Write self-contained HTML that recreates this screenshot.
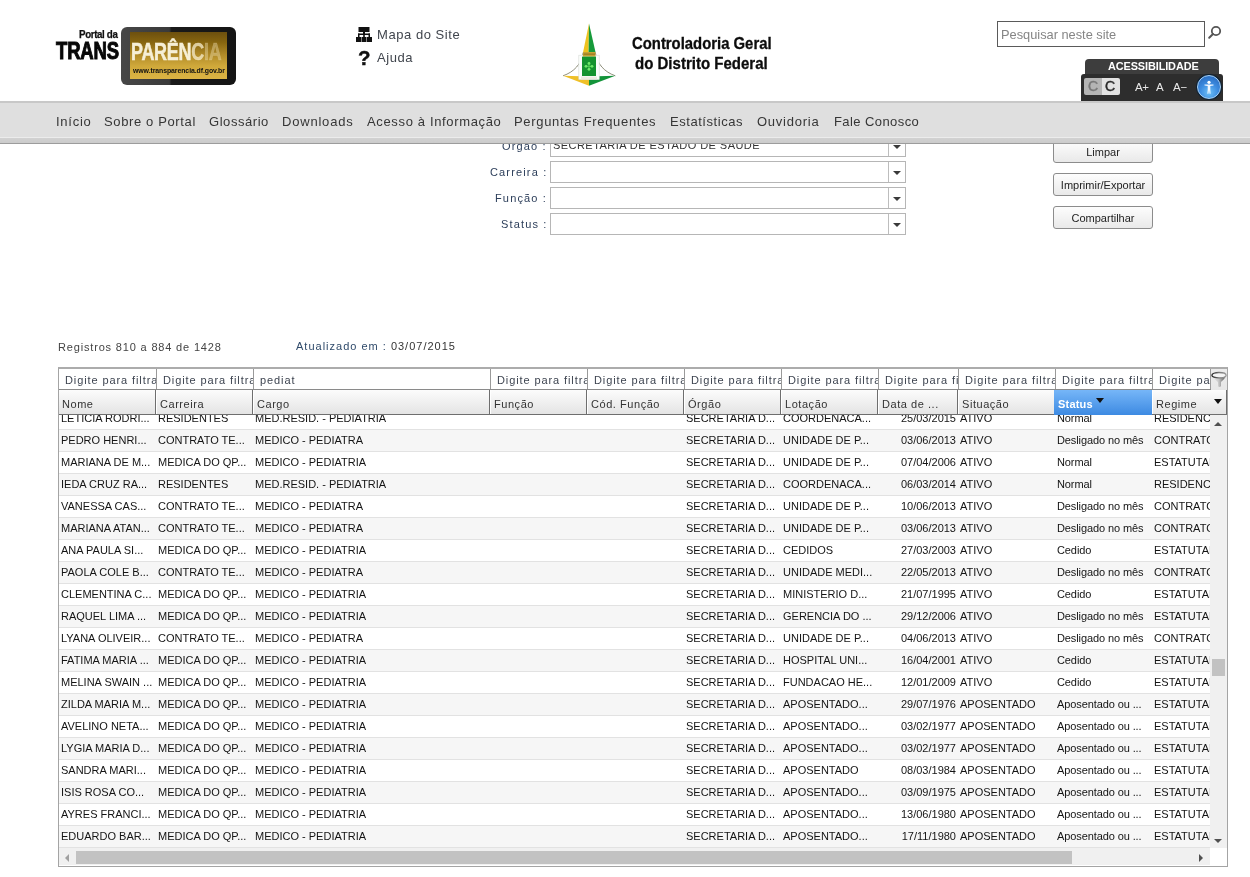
<!DOCTYPE html>
<html>
<head>
<meta charset="utf-8">
<style>
*{box-sizing:border-box;margin:0;padding:0}
html,body{width:1250px;height:877px;overflow:hidden;background:#fff;font-family:"Liberation Sans",sans-serif;position:relative}
body>*{will-change:transform}
.a{position:absolute;white-space:nowrap}
/* nav */
#nav{position:absolute;left:0;top:101px;width:1250px;height:43px;background:#dfdfdf;border-top:2px solid #c8c8c8;z-index:5}
#nav:after{content:"";position:absolute;left:0;right:0;top:34px;height:6px;box-sizing:content-box;background:linear-gradient(#ececec 0,#ececec 1px,#d2d2d2 1px,#cbcbcb);border-bottom:1px solid #9c9c9c}
.ni{position:absolute;top:11px;font-size:13px;color:#363636;letter-spacing:0.55px;line-height:16px}
/* form */
.lbl{position:absolute;font-size:11px;color:#2c3e5a;text-align:right;right:703px;letter-spacing:1.15px;line-height:14px}
.dd{position:absolute;left:550px;width:356px;height:22px;border:1px solid #b6b6b6;background:#fff}
.dd .ar{position:absolute;right:0;top:0;width:17px;height:20px;border-left:1px solid #bdbdbd}
.dd .ar:after{content:"";box-sizing:content-box;position:absolute;left:4px;top:9px;border-left:4px solid transparent;border-right:4px solid transparent;border-top:4px solid #3a3a3a}
/* grid */
.fc{position:absolute;top:0;height:20px;border-right:1px solid #9a9a9a;padding-left:7px;padding-top:1px;font-size:11px;color:#3d4450;letter-spacing:0.9px;line-height:20px;overflow:hidden;white-space:nowrap}
.hc{position:absolute;top:21px;height:25px;border-right:1px solid #6e6e6e;border-bottom:1px solid #6e6e6e;box-shadow:inset 1px 0 #fff;background:linear-gradient(#fcfcfc,#e4e4e4);padding-left:4px;padding-top:7px;font-size:11px;color:#333;letter-spacing:0.55px;line-height:14px;overflow:hidden;white-space:nowrap}
.hs{background:linear-gradient(#76b6f8,#3d8ae2);color:#fff;font-weight:bold;letter-spacing:0.2px;border-right:none;border-bottom:none;box-shadow:none;padding-left:4px}
.hs .tri{position:absolute;left:42px;top:8px;border-left:4px solid transparent;border-right:4px solid transparent;border-top:5px solid #111}
.rw{position:absolute;left:0;width:1151px;height:22px;border-bottom:1px solid #e2e2e2}
.dc{position:absolute;top:0;height:21px;padding-left:3px;font-size:11px;color:#141414;line-height:21px;overflow:hidden;white-space:nowrap}
.st{letter-spacing:-0.1px;padding-left:2px}
.btn{position:absolute;left:1053px;width:100px;height:23px;border:1px solid #8c8c8c;border-radius:3px;background:linear-gradient(#fdfdfd,#e9e9e9);font-size:11px;color:#222;text-align:center;line-height:22px}
</style>
</head>
<body>
<!-- HEADER -->
<div id="hdr">
  <!-- logo -->
  <div class="a" style="left:79px;top:28px;font-size:10.5px;font-weight:bold;color:#111;letter-spacing:-0.4px;line-height:12px;transform:scaleX(0.93);-webkit-text-stroke:0.25px #111;transform-origin:0 0">Portal da</div>
  <div class="a" style="left:56.3px;top:37px;font-size:23.6px;font-weight:bold;color:#080808;line-height:29px;transform:scaleX(0.785);transform-origin:0 0;letter-spacing:-0.2px;-webkit-text-stroke:1px #080808">TRANS</div>
  <div class="a" style="left:121px;top:27px;width:115px;height:58px;border-radius:6px;background:linear-gradient(90deg,#474747 0%,#3a3a3a 42%,#1a1a1a 44%,#141414 100%)"></div>
  <div class="a" style="left:130px;top:32px;width:97px;height:47px;background:linear-gradient(180deg,#6c4f0e 0%,#87650f 22%,#b08a28 48%,#cfa83a 72%,#dcb444 100%)"></div>
  <div class="a" style="left:131px;top:38px;font-size:23px;font-weight:bold;line-height:28px;transform:scaleX(0.78);transform-origin:0 0;letter-spacing:-0.3px;color:#f6efd6;-webkit-text-stroke:0.5px #f6efd6">PARÊN<span style="color:rgba(246,236,205,0.75);-webkit-text-stroke-color:rgba(246,236,205,0.6)">C</span><span style="color:rgba(240,225,180,0.4);-webkit-text-stroke-color:rgba(240,225,180,0.3)">IA</span></div>
  <div class="a" style="left:133px;top:66px;font-size:8px;font-weight:bold;color:#111;line-height:9px;transform:scaleX(0.865);transform-origin:0 0;letter-spacing:-0.1px">www.transparencia.df.gov.br</div>

  <!-- mapa / ajuda -->
  <svg class="a" style="left:356px;top:27px" width="16" height="15" viewBox="0 0 16 15">
    <rect x="2.5" y="0" width="11" height="5" fill="#111"/>
    <rect x="7" y="5" width="2" height="2.5" fill="#111"/>
    <rect x="2" y="6.5" width="12" height="1.5" fill="#111"/>
    <rect x="2" y="6.5" width="1.5" height="4" fill="#111"/>
    <rect x="12.5" y="6.5" width="1.5" height="4" fill="#111"/>
    <rect x="7.2" y="6.5" width="1.6" height="4" fill="#111"/>
    <rect x="0" y="10" width="5" height="5" fill="#111"/>
    <rect x="5.5" y="10" width="5" height="5" fill="#111"/>
    <rect x="11" y="10" width="5" height="5" fill="#111"/>
  </svg>
  <div class="a" style="left:377px;top:27px;font-size:13px;color:#40454d;letter-spacing:0.55px;line-height:16px">Mapa do Site</div>
  <div class="a" style="left:358px;top:47px;font-size:19.5px;font-weight:bold;color:#111;line-height:22px;transform:scaleX(1.05);transform-origin:0 0;-webkit-text-stroke:0.4px #111">?</div>
  <div class="a" style="left:377px;top:50px;font-size:13px;color:#40454d;letter-spacing:0.55px;line-height:16px">Ajuda</div>

  <!-- CGDF emblem -->
  <svg class="a" style="left:558px;top:18px" width="62" height="72" viewBox="0 0 62 72">
    <path d="M25.2 34.5 C23.5 46 16 54 5 57.8" stroke="#6a6a50" stroke-width="0.75" fill="none"/>
    <path d="M37.3 34.5 C39 46 46.5 54 57.3 57.8" stroke="#6a6a50" stroke-width="0.75" fill="none"/>
    <path d="M5 57.8 L31 58.5 L31 67.8 Z" fill="#efc028"/>
    <path d="M57.3 57.8 L31 58.5 L31 67.8 Z" fill="#13943a"/>
    <path d="M31 5.5 L25 34.5 L30.6 34.5 Z" fill="#efc21e"/>
    <path d="M31 5.5 L37.6 34.5 L30.6 34.5 Z" fill="#169a3a"/>
    <rect x="20.8" y="37.2" width="20.4" height="24.4" fill="#fbfdfb" stroke="#d8dcd8" stroke-width="0.6"/>
    <rect x="25" y="34" width="12.5" height="4.6" fill="#c9a234"/>
    <rect x="25.5" y="35.6" width="11.5" height="1" fill="#8a7020"/>
    <rect x="24" y="38.6" width="14" height="19.4" fill="#14932f"/>
    <path d="M31 44.2 L31 52.4 M26.9 48.3 L35.1 48.3" stroke="#57d457" stroke-width="0.9"/>
    <circle cx="31" cy="45.4" r="1.4" fill="#6ee86a"/>
    <circle cx="31" cy="51.3" r="1.4" fill="#6ee86a"/>
    <circle cx="28" cy="48.3" r="1.4" fill="#6ee86a"/>
    <circle cx="34" cy="48.3" r="1.4" fill="#6ee86a"/>
    <rect x="23" y="58.6" width="16" height="2.8" fill="#ecece0"/>
  </svg>
  <div class="a" style="left:631.5px;top:35px;font-size:15.6px;font-weight:bold;color:#0c0c0c;line-height:18px;transform:scaleX(0.953);transform-origin:0 0;-webkit-text-stroke:0.3px #0c0c0c">Controladoria Geral</div>
  <div class="a" style="left:635px;top:55px;font-size:15.6px;font-weight:bold;color:#0c0c0c;line-height:18px;transform:scaleX(0.963);transform-origin:0 0;-webkit-text-stroke:0.3px #0c0c0c">do Distrito Federal</div>

  <!-- search -->
  <div class="a" style="left:997px;top:21px;width:208px;height:26px;border:1px solid #5a5a5a;background:#fff"></div>
  <div class="a" style="left:1001px;top:27px;font-size:12.8px;color:#858585;line-height:16px">Pesquisar neste site</div>
  <svg class="a" style="left:1206px;top:23px" width="18" height="18" viewBox="0 0 18 18">
    <circle cx="10" cy="8" r="4.2" stroke="#555" stroke-width="1.8" fill="none"/>
    <line x1="7" y1="11" x2="3.2" y2="14.8" stroke="#555" stroke-width="2" stroke-linecap="round"/>
  </svg>

  <!-- accessibility -->
  <div class="a" style="left:1085px;top:59px;width:134px;height:16px;background:#3d3d3d;border-radius:4px 4px 0 0"></div>
  <div class="a" style="left:1108px;top:59px;font-size:10.9px;font-weight:bold;color:#fff;line-height:14px;letter-spacing:-0.1px">ACESSIBILIDADE</div>
  <div class="a" style="left:1081px;top:74px;width:142px;height:27px;background:#2d2d2d;border-radius:3px 3px 0 0"></div>
  <div class="a" style="left:1084px;top:78px;width:18px;height:17px;background:#b4b4b4;border-radius:2px 0 0 2px"></div>
  <div class="a" style="left:1102px;top:78px;width:18px;height:17px;background:#e2e2e2;border-radius:0 2px 2px 0"></div>
  <div class="a" style="left:1088px;top:78px;font-size:14px;color:#777;line-height:17px;-webkit-text-stroke:0.45px #777">C</div>
  <div class="a" style="left:1105px;top:78px;font-size:14px;color:#2a2a2a;line-height:17px;-webkit-text-stroke:0.45px #2a2a2a">C</div>
  <div class="a" style="left:1135px;top:80px;font-size:11.5px;color:#e8e8e8;line-height:14px;letter-spacing:-0.3px">A+</div><div class="a" style="left:1156px;top:80px;font-size:11.5px;color:#e8e8e8;line-height:14px">A</div><div class="a" style="left:1173px;top:80px;font-size:11.5px;color:#e8e8e8;line-height:14px;letter-spacing:-0.2px">A−</div>
  <div class="a" style="left:1196px;top:74px;width:26px;height:26px;border-radius:50%;background:#0e2236"></div>
  <div class="a" style="left:1197px;top:75px;width:24px;height:24px;border-radius:50%;background:radial-gradient(circle at 50% 75%,#6cc0f8 0%,#3d8ce0 45%,#2f74c8 75%);border:1.6px solid #a9d2f6"></div>
  <svg class="a" style="left:1200px;top:78px" width="18" height="18" viewBox="0 0 18 18">
    <circle cx="9" cy="4.3" r="1.6" fill="#fff"/>
    <path d="M4.5 6.6 L13.5 6.6 L13.5 7.6 L10.3 8.1 L10.3 11.5 L10.6 15.8 L9.6 15.8 L9 12 L8.4 15.8 L7.4 15.8 L7.7 11.5 L7.7 8.1 L4.5 7.6 Z" fill="#f4f8ff"/>
  </svg>
</div>

<!-- FORM (scrolled under nav) -->
<div class="lbl" style="top:139px">Órgão :</div>
<div class="dd" style="top:135px"><div class="a" style="left:2px;top:2px;font-size:11px;color:#333;letter-spacing:0.45px;line-height:14px">SECRETARIA DE ESTADO DE SAUDE</div><div class="ar"></div></div>
<div class="lbl" style="top:165px">Carreira :</div>
<div class="dd" style="top:161px"><div class="ar"></div></div>
<div class="lbl" style="top:191px">Função :</div>
<div class="dd" style="top:187px"><div class="ar"></div></div>
<div class="lbl" style="top:217px">Status :</div>
<div class="dd" style="top:213px"><div class="ar"></div></div>

<div class="btn" style="top:140px">Limpar</div>
<div class="btn" style="top:173px">Imprimir/Exportar</div>
<div class="btn" style="top:206px">Compartilhar</div>

<!-- NAV -->
<div id="nav">
  <div class="ni" style="left:56px;letter-spacing:0.75px">Início</div>
  <div class="ni" style="left:104px;letter-spacing:0.63px">Sobre o Portal</div>
  <div class="ni" style="left:209px">Glossário</div>
  <div class="ni" style="left:282px;letter-spacing:0.8px">Downloads</div>
  <div class="ni" style="left:367px;letter-spacing:0.65px">Acesso à Informação</div>
  <div class="ni" style="left:514px;letter-spacing:0.68px">Perguntas Frequentes</div>
  <div class="ni" style="left:670px">Estatísticas</div>
  <div class="ni" style="left:757px;letter-spacing:0.75px">Ouvidoria</div>
  <div class="ni" style="left:834px;letter-spacing:0.42px">Fale Conosco</div>
</div>

<!-- RECORDS -->
<div class="a" style="left:58px;top:340px;font-size:11px;color:#444;letter-spacing:0.83px;line-height:14px">Registros 810 a 884 de 1428</div>
<div class="a" style="left:296px;top:339px;font-size:11px;color:#2f4a6a;letter-spacing:1px;line-height:14px">Atualizado em : <span style="color:#333">03/07/2015</span></div>

<!-- GRID -->
<div id="grid" class="a" style="left:58px;top:367px;width:1170px;height:500px;border:1px solid #a4a4a4;border-top:2px solid #acacac;background:#fff;overflow:hidden">
<div class="a" style="left:0;top:0;width:1168px;height:21px;border-bottom:1px solid #8a8a8a;background:#fff"></div>
<div class="fc" style="left:-1px;width:99px">Digite para filtra</div>
<div class="fc" style="left:97px;width:98px">Digite para filtra</div>
<div class="fc" style="left:194px;width:238px">pediat</div>
<div class="fc" style="left:431px;width:98px">Digite para filtra</div>
<div class="fc" style="left:528px;width:98px">Digite para filtra</div>
<div class="fc" style="left:625px;width:98px">Digite para filtra</div>
<div class="fc" style="left:722px;width:98px">Digite para filtra</div>
<div class="fc" style="left:819px;width:81px">Digite para fi</div>
<div class="fc" style="left:899px;width:98px">Digite para filtra</div>
<div class="fc" style="left:996px;width:98px">Digite para filtra</div>
<div class="fc" style="left:1093px;width:59px">Digite para filtra</div>
<div class="a" style="left:1152px;top:0;width:16px;height:46px;background:linear-gradient(#ececec,#e0e0e0)"></div>
<svg class="a" style="left:1152px;top:2px" width="16" height="17" viewBox="0 0 16 17"><defs><linearGradient id="fb" x1="0" x2="1"><stop offset="0" stop-color="#f2f2f2"/><stop offset="0.5" stop-color="#c4c4c4"/><stop offset="1" stop-color="#4a4a4a"/></linearGradient><linearGradient id="fr" x1="0" x2="1"><stop offset="0" stop-color="#1e1e1e"/><stop offset="0.5" stop-color="#777"/><stop offset="1" stop-color="#9a9a9a"/></linearGradient></defs><path d="M0.8 4.2 Q3 9 7 11 L7.2 15.6 Q8.6 16.4 10 15.2 L10 11 Q13.6 8.5 15.2 4.2 Z" fill="url(#fb)"/><ellipse cx="8" cy="4.2" rx="7.1" ry="2.7" fill="#f4f4f4" stroke="url(#fr)" stroke-width="1.3"/></svg>
<div class="hc" style="left:-1px;width:98px">Nome</div>
<div class="hc" style="left:97px;width:97px">Carreira</div>
<div class="hc" style="left:194px;width:237px">Cargo</div>
<div class="hc" style="left:431px;width:97px">Função</div>
<div class="hc" style="left:528px;width:97px">Cód. Função</div>
<div class="hc" style="left:625px;width:97px">Órgão</div>
<div class="hc" style="left:722px;width:97px">Lotação</div>
<div class="hc" style="left:819px;width:80px">Data de ...</div>
<div class="hc" style="left:899px;width:97px">Situação</div>
<div class="hc hs" style="left:995px;width:98px">Status<span class="tri"></span></div>
<div class="hc" style="left:1093px;width:75px">Regime</div>
<div class="a" style="left:1155px;top:30px;border-left:4px solid transparent;border-right:4px solid transparent;border-top:5px solid #111"></div>
<div class="a" style="left:0;top:46px;width:1151px;height:433px;overflow:hidden">
<div class="rw" style="top:-7px;background:#fff">
<div class="dc" style="left:-1px;width:98px">LETICIA RODRI...</div>
<div class="dc" style="left:97px;width:97px;padding-left:2px">RESIDENTES</div>
<div class="dc" style="left:194px;width:237px;padding-left:2px">MED.RESID. - PEDIATRIA</div>
<div class="dc" style="left:625px;width:97px;padding-left:2px">SECRETARIA D...</div>
<div class="dc" style="left:722px;width:97px;padding-left:2px">COORDENACA...</div>
<div class="dc" style="left:819px;width:78px;text-align:right;padding:0">25/03/2015</div>
<div class="dc" style="left:899px;width:97px;padding-left:2px">ATIVO</div>
<div class="dc st" style="left:996px;width:97px">Normal</div>
<div class="dc" style="left:1093px;width:58px;padding-left:2px">RESIDENCIA</div>
</div>
<div class="rw" style="top:15px;background:#f6f6f6">
<div class="dc" style="left:-1px;width:98px">PEDRO HENRI...</div>
<div class="dc" style="left:97px;width:97px;padding-left:2px">CONTRATO TE...</div>
<div class="dc" style="left:194px;width:237px;padding-left:2px">MEDICO - PEDIATRA</div>
<div class="dc" style="left:625px;width:97px;padding-left:2px">SECRETARIA D...</div>
<div class="dc" style="left:722px;width:97px;padding-left:2px">UNIDADE DE P...</div>
<div class="dc" style="left:819px;width:78px;text-align:right;padding:0">03/06/2013</div>
<div class="dc" style="left:899px;width:97px;padding-left:2px">ATIVO</div>
<div class="dc st" style="left:996px;width:97px">Desligado no mês</div>
<div class="dc" style="left:1093px;width:58px;padding-left:2px">CONTRATO</div>
</div>
<div class="rw" style="top:37px;background:#fff">
<div class="dc" style="left:-1px;width:98px">MARIANA DE M...</div>
<div class="dc" style="left:97px;width:97px;padding-left:2px">MEDICA DO QP...</div>
<div class="dc" style="left:194px;width:237px;padding-left:2px">MEDICO - PEDIATRIA</div>
<div class="dc" style="left:625px;width:97px;padding-left:2px">SECRETARIA D...</div>
<div class="dc" style="left:722px;width:97px;padding-left:2px">UNIDADE DE P...</div>
<div class="dc" style="left:819px;width:78px;text-align:right;padding:0">07/04/2006</div>
<div class="dc" style="left:899px;width:97px;padding-left:2px">ATIVO</div>
<div class="dc st" style="left:996px;width:97px">Normal</div>
<div class="dc" style="left:1093px;width:58px;padding-left:2px">ESTATUTARIO</div>
</div>
<div class="rw" style="top:59px;background:#f6f6f6">
<div class="dc" style="left:-1px;width:98px">IEDA CRUZ RA...</div>
<div class="dc" style="left:97px;width:97px;padding-left:2px">RESIDENTES</div>
<div class="dc" style="left:194px;width:237px;padding-left:2px">MED.RESID. - PEDIATRIA</div>
<div class="dc" style="left:625px;width:97px;padding-left:2px">SECRETARIA D...</div>
<div class="dc" style="left:722px;width:97px;padding-left:2px">COORDENACA...</div>
<div class="dc" style="left:819px;width:78px;text-align:right;padding:0">06/03/2014</div>
<div class="dc" style="left:899px;width:97px;padding-left:2px">ATIVO</div>
<div class="dc st" style="left:996px;width:97px">Normal</div>
<div class="dc" style="left:1093px;width:58px;padding-left:2px">RESIDENCIA</div>
</div>
<div class="rw" style="top:81px;background:#fff">
<div class="dc" style="left:-1px;width:98px">VANESSA CAS...</div>
<div class="dc" style="left:97px;width:97px;padding-left:2px">CONTRATO TE...</div>
<div class="dc" style="left:194px;width:237px;padding-left:2px">MEDICO - PEDIATRA</div>
<div class="dc" style="left:625px;width:97px;padding-left:2px">SECRETARIA D...</div>
<div class="dc" style="left:722px;width:97px;padding-left:2px">UNIDADE DE P...</div>
<div class="dc" style="left:819px;width:78px;text-align:right;padding:0">10/06/2013</div>
<div class="dc" style="left:899px;width:97px;padding-left:2px">ATIVO</div>
<div class="dc st" style="left:996px;width:97px">Desligado no mês</div>
<div class="dc" style="left:1093px;width:58px;padding-left:2px">CONTRATO</div>
</div>
<div class="rw" style="top:103px;background:#f6f6f6">
<div class="dc" style="left:-1px;width:98px">MARIANA ATAN...</div>
<div class="dc" style="left:97px;width:97px;padding-left:2px">CONTRATO TE...</div>
<div class="dc" style="left:194px;width:237px;padding-left:2px">MEDICO - PEDIATRA</div>
<div class="dc" style="left:625px;width:97px;padding-left:2px">SECRETARIA D...</div>
<div class="dc" style="left:722px;width:97px;padding-left:2px">UNIDADE DE P...</div>
<div class="dc" style="left:819px;width:78px;text-align:right;padding:0">03/06/2013</div>
<div class="dc" style="left:899px;width:97px;padding-left:2px">ATIVO</div>
<div class="dc st" style="left:996px;width:97px">Desligado no mês</div>
<div class="dc" style="left:1093px;width:58px;padding-left:2px">CONTRATO</div>
</div>
<div class="rw" style="top:125px;background:#fff">
<div class="dc" style="left:-1px;width:98px">ANA PAULA SI...</div>
<div class="dc" style="left:97px;width:97px;padding-left:2px">MEDICA DO QP...</div>
<div class="dc" style="left:194px;width:237px;padding-left:2px">MEDICO - PEDIATRIA</div>
<div class="dc" style="left:625px;width:97px;padding-left:2px">SECRETARIA D...</div>
<div class="dc" style="left:722px;width:97px;padding-left:2px">CEDIDOS</div>
<div class="dc" style="left:819px;width:78px;text-align:right;padding:0">27/03/2003</div>
<div class="dc" style="left:899px;width:97px;padding-left:2px">ATIVO</div>
<div class="dc st" style="left:996px;width:97px">Cedido</div>
<div class="dc" style="left:1093px;width:58px;padding-left:2px">ESTATUTARIO</div>
</div>
<div class="rw" style="top:147px;background:#f6f6f6">
<div class="dc" style="left:-1px;width:98px">PAOLA COLE B...</div>
<div class="dc" style="left:97px;width:97px;padding-left:2px">CONTRATO TE...</div>
<div class="dc" style="left:194px;width:237px;padding-left:2px">MEDICO - PEDIATRA</div>
<div class="dc" style="left:625px;width:97px;padding-left:2px">SECRETARIA D...</div>
<div class="dc" style="left:722px;width:97px;padding-left:2px">UNIDADE MEDI...</div>
<div class="dc" style="left:819px;width:78px;text-align:right;padding:0">22/05/2013</div>
<div class="dc" style="left:899px;width:97px;padding-left:2px">ATIVO</div>
<div class="dc st" style="left:996px;width:97px">Desligado no mês</div>
<div class="dc" style="left:1093px;width:58px;padding-left:2px">CONTRATO</div>
</div>
<div class="rw" style="top:169px;background:#fff">
<div class="dc" style="left:-1px;width:98px">CLEMENTINA C...</div>
<div class="dc" style="left:97px;width:97px;padding-left:2px">MEDICA DO QP...</div>
<div class="dc" style="left:194px;width:237px;padding-left:2px">MEDICO - PEDIATRIA</div>
<div class="dc" style="left:625px;width:97px;padding-left:2px">SECRETARIA D...</div>
<div class="dc" style="left:722px;width:97px;padding-left:2px">MINISTERIO D...</div>
<div class="dc" style="left:819px;width:78px;text-align:right;padding:0">21/07/1995</div>
<div class="dc" style="left:899px;width:97px;padding-left:2px">ATIVO</div>
<div class="dc st" style="left:996px;width:97px">Cedido</div>
<div class="dc" style="left:1093px;width:58px;padding-left:2px">ESTATUTARIO</div>
</div>
<div class="rw" style="top:191px;background:#f6f6f6">
<div class="dc" style="left:-1px;width:98px">RAQUEL LIMA ...</div>
<div class="dc" style="left:97px;width:97px;padding-left:2px">MEDICA DO QP...</div>
<div class="dc" style="left:194px;width:237px;padding-left:2px">MEDICO - PEDIATRIA</div>
<div class="dc" style="left:625px;width:97px;padding-left:2px">SECRETARIA D...</div>
<div class="dc" style="left:722px;width:97px;padding-left:2px">GERENCIA DO ...</div>
<div class="dc" style="left:819px;width:78px;text-align:right;padding:0">29/12/2006</div>
<div class="dc" style="left:899px;width:97px;padding-left:2px">ATIVO</div>
<div class="dc st" style="left:996px;width:97px">Desligado no mês</div>
<div class="dc" style="left:1093px;width:58px;padding-left:2px">ESTATUTARIO</div>
</div>
<div class="rw" style="top:213px;background:#fff">
<div class="dc" style="left:-1px;width:98px">LYANA OLIVEIR...</div>
<div class="dc" style="left:97px;width:97px;padding-left:2px">CONTRATO TE...</div>
<div class="dc" style="left:194px;width:237px;padding-left:2px">MEDICO - PEDIATRA</div>
<div class="dc" style="left:625px;width:97px;padding-left:2px">SECRETARIA D...</div>
<div class="dc" style="left:722px;width:97px;padding-left:2px">UNIDADE DE P...</div>
<div class="dc" style="left:819px;width:78px;text-align:right;padding:0">04/06/2013</div>
<div class="dc" style="left:899px;width:97px;padding-left:2px">ATIVO</div>
<div class="dc st" style="left:996px;width:97px">Desligado no mês</div>
<div class="dc" style="left:1093px;width:58px;padding-left:2px">CONTRATO</div>
</div>
<div class="rw" style="top:235px;background:#f6f6f6">
<div class="dc" style="left:-1px;width:98px">FATIMA MARIA ...</div>
<div class="dc" style="left:97px;width:97px;padding-left:2px">MEDICA DO QP...</div>
<div class="dc" style="left:194px;width:237px;padding-left:2px">MEDICO - PEDIATRIA</div>
<div class="dc" style="left:625px;width:97px;padding-left:2px">SECRETARIA D...</div>
<div class="dc" style="left:722px;width:97px;padding-left:2px">HOSPITAL UNI...</div>
<div class="dc" style="left:819px;width:78px;text-align:right;padding:0">16/04/2001</div>
<div class="dc" style="left:899px;width:97px;padding-left:2px">ATIVO</div>
<div class="dc st" style="left:996px;width:97px">Cedido</div>
<div class="dc" style="left:1093px;width:58px;padding-left:2px">ESTATUTARIO</div>
</div>
<div class="rw" style="top:257px;background:#fff">
<div class="dc" style="left:-1px;width:98px">MELINA SWAIN ...</div>
<div class="dc" style="left:97px;width:97px;padding-left:2px">MEDICA DO QP...</div>
<div class="dc" style="left:194px;width:237px;padding-left:2px">MEDICO - PEDIATRIA</div>
<div class="dc" style="left:625px;width:97px;padding-left:2px">SECRETARIA D...</div>
<div class="dc" style="left:722px;width:97px;padding-left:2px">FUNDACAO HE...</div>
<div class="dc" style="left:819px;width:78px;text-align:right;padding:0">12/01/2009</div>
<div class="dc" style="left:899px;width:97px;padding-left:2px">ATIVO</div>
<div class="dc st" style="left:996px;width:97px">Cedido</div>
<div class="dc" style="left:1093px;width:58px;padding-left:2px">ESTATUTARIO</div>
</div>
<div class="rw" style="top:279px;background:#f6f6f6">
<div class="dc" style="left:-1px;width:98px">ZILDA MARIA M...</div>
<div class="dc" style="left:97px;width:97px;padding-left:2px">MEDICA DO QP...</div>
<div class="dc" style="left:194px;width:237px;padding-left:2px">MEDICO - PEDIATRIA</div>
<div class="dc" style="left:625px;width:97px;padding-left:2px">SECRETARIA D...</div>
<div class="dc" style="left:722px;width:97px;padding-left:2px">APOSENTADO...</div>
<div class="dc" style="left:819px;width:78px;text-align:right;padding:0">29/07/1976</div>
<div class="dc" style="left:899px;width:97px;padding-left:2px">APOSENTADO</div>
<div class="dc st" style="left:996px;width:97px">Aposentado ou ...</div>
<div class="dc" style="left:1093px;width:58px;padding-left:2px">ESTATUTARIO</div>
</div>
<div class="rw" style="top:301px;background:#fff">
<div class="dc" style="left:-1px;width:98px">AVELINO NETA...</div>
<div class="dc" style="left:97px;width:97px;padding-left:2px">MEDICA DO QP...</div>
<div class="dc" style="left:194px;width:237px;padding-left:2px">MEDICO - PEDIATRIA</div>
<div class="dc" style="left:625px;width:97px;padding-left:2px">SECRETARIA D...</div>
<div class="dc" style="left:722px;width:97px;padding-left:2px">APOSENTADO...</div>
<div class="dc" style="left:819px;width:78px;text-align:right;padding:0">03/02/1977</div>
<div class="dc" style="left:899px;width:97px;padding-left:2px">APOSENTADO</div>
<div class="dc st" style="left:996px;width:97px">Aposentado ou ...</div>
<div class="dc" style="left:1093px;width:58px;padding-left:2px">ESTATUTARIO</div>
</div>
<div class="rw" style="top:323px;background:#f6f6f6">
<div class="dc" style="left:-1px;width:98px">LYGIA MARIA D...</div>
<div class="dc" style="left:97px;width:97px;padding-left:2px">MEDICA DO QP...</div>
<div class="dc" style="left:194px;width:237px;padding-left:2px">MEDICO - PEDIATRIA</div>
<div class="dc" style="left:625px;width:97px;padding-left:2px">SECRETARIA D...</div>
<div class="dc" style="left:722px;width:97px;padding-left:2px">APOSENTADO...</div>
<div class="dc" style="left:819px;width:78px;text-align:right;padding:0">03/02/1977</div>
<div class="dc" style="left:899px;width:97px;padding-left:2px">APOSENTADO</div>
<div class="dc st" style="left:996px;width:97px">Aposentado ou ...</div>
<div class="dc" style="left:1093px;width:58px;padding-left:2px">ESTATUTARIO</div>
</div>
<div class="rw" style="top:345px;background:#fff">
<div class="dc" style="left:-1px;width:98px">SANDRA MARI...</div>
<div class="dc" style="left:97px;width:97px;padding-left:2px">MEDICA DO QP...</div>
<div class="dc" style="left:194px;width:237px;padding-left:2px">MEDICO - PEDIATRIA</div>
<div class="dc" style="left:625px;width:97px;padding-left:2px">SECRETARIA D...</div>
<div class="dc" style="left:722px;width:97px;padding-left:2px">APOSENTADO</div>
<div class="dc" style="left:819px;width:78px;text-align:right;padding:0">08/03/1984</div>
<div class="dc" style="left:899px;width:97px;padding-left:2px">APOSENTADO</div>
<div class="dc st" style="left:996px;width:97px">Aposentado ou ...</div>
<div class="dc" style="left:1093px;width:58px;padding-left:2px">ESTATUTARIO</div>
</div>
<div class="rw" style="top:367px;background:#f6f6f6">
<div class="dc" style="left:-1px;width:98px">ISIS ROSA CO...</div>
<div class="dc" style="left:97px;width:97px;padding-left:2px">MEDICA DO QP...</div>
<div class="dc" style="left:194px;width:237px;padding-left:2px">MEDICO - PEDIATRIA</div>
<div class="dc" style="left:625px;width:97px;padding-left:2px">SECRETARIA D...</div>
<div class="dc" style="left:722px;width:97px;padding-left:2px">APOSENTADO...</div>
<div class="dc" style="left:819px;width:78px;text-align:right;padding:0">03/09/1975</div>
<div class="dc" style="left:899px;width:97px;padding-left:2px">APOSENTADO</div>
<div class="dc st" style="left:996px;width:97px">Aposentado ou ...</div>
<div class="dc" style="left:1093px;width:58px;padding-left:2px">ESTATUTARIO</div>
</div>
<div class="rw" style="top:389px;background:#fff">
<div class="dc" style="left:-1px;width:98px">AYRES FRANCI...</div>
<div class="dc" style="left:97px;width:97px;padding-left:2px">MEDICA DO QP...</div>
<div class="dc" style="left:194px;width:237px;padding-left:2px">MEDICO - PEDIATRIA</div>
<div class="dc" style="left:625px;width:97px;padding-left:2px">SECRETARIA D...</div>
<div class="dc" style="left:722px;width:97px;padding-left:2px">APOSENTADO...</div>
<div class="dc" style="left:819px;width:78px;text-align:right;padding:0">13/06/1980</div>
<div class="dc" style="left:899px;width:97px;padding-left:2px">APOSENTADO</div>
<div class="dc st" style="left:996px;width:97px">Aposentado ou ...</div>
<div class="dc" style="left:1093px;width:58px;padding-left:2px">ESTATUTARIO</div>
</div>
<div class="rw" style="top:411px;background:#f6f6f6">
<div class="dc" style="left:-1px;width:98px">EDUARDO BAR...</div>
<div class="dc" style="left:97px;width:97px;padding-left:2px">MEDICA DO QP...</div>
<div class="dc" style="left:194px;width:237px;padding-left:2px">MEDICO - PEDIATRIA</div>
<div class="dc" style="left:625px;width:97px;padding-left:2px">SECRETARIA D...</div>
<div class="dc" style="left:722px;width:97px;padding-left:2px">APOSENTADO...</div>
<div class="dc" style="left:819px;width:78px;text-align:right;padding:0">17/11/1980</div>
<div class="dc" style="left:899px;width:97px;padding-left:2px">APOSENTADO</div>
<div class="dc st" style="left:996px;width:97px">Aposentado ou ...</div>
<div class="dc" style="left:1093px;width:58px;padding-left:2px">ESTATUTARIO</div>
</div>
</div>
<div class="a" style="left:1151px;top:46px;width:17px;height:433px;background:#f0f0f0"></div>
<div class="a" style="left:1155px;top:53px;border-left:4px solid transparent;border-right:4px solid transparent;border-bottom:4px solid #505050"></div>
<div class="a" style="left:1155px;top:470px;border-left:4px solid transparent;border-right:4px solid transparent;border-top:4px solid #505050"></div>
<div class="a" style="left:1153px;top:290px;width:13px;height:17px;background:#c2c2c2"></div>
<div class="a" style="left:0;top:479px;width:1151px;height:17px;background:#f0f0f0"></div>
<div class="a" style="left:6px;top:485px;border-top:4px solid transparent;border-bottom:4px solid transparent;border-right:4px solid #a0a0a0"></div>
<div class="a" style="left:1140px;top:485px;border-top:4px solid transparent;border-bottom:4px solid transparent;border-left:4px solid #505050"></div>
<div class="a" style="left:17px;top:482px;width:996px;height:13px;background:#c2c2c2"></div>
</div>
</body>
</html>
